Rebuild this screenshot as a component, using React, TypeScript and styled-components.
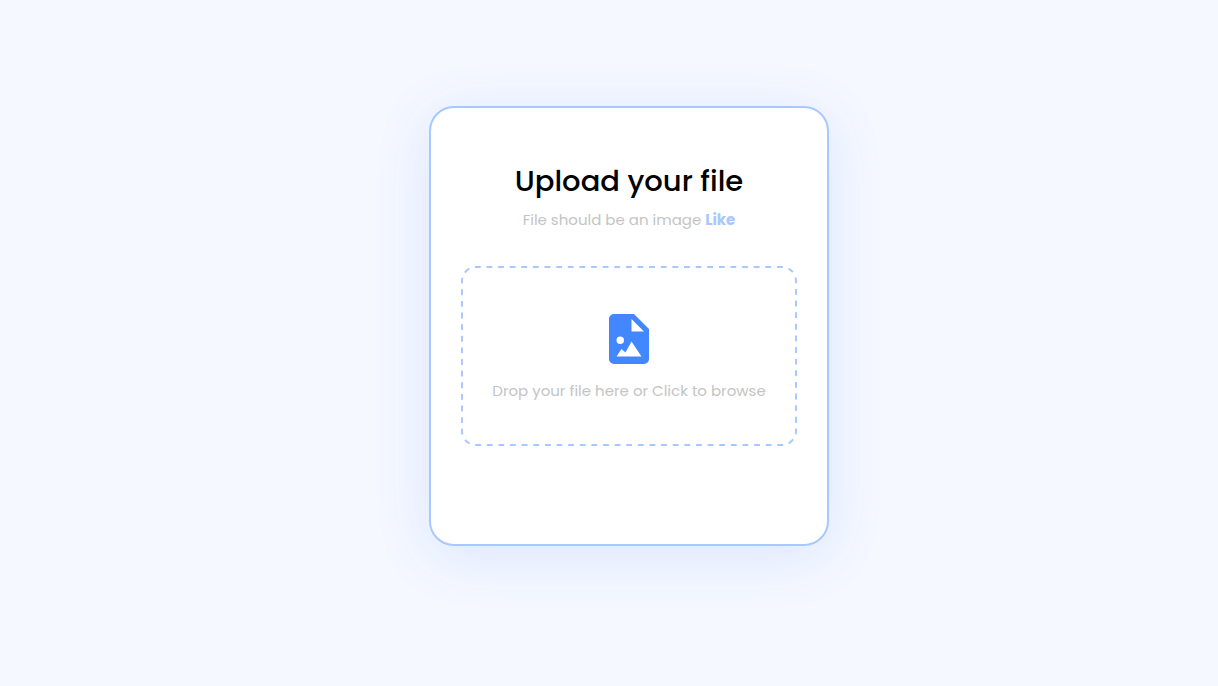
import React from "react";
import styled, { createGlobalStyle } from "styled-components";
import { BiSolidFileImage } from "react-icons/bi";

const GlobalStyle = createGlobalStyle`
  * {
    box-sizing: border-box;
    margin: 0;
    padding: 0;
  }

  body {
    background: #f5f8ff;
    font-family: Poppins, Inter, sans-serif;
    -webkit-font-smoothing: antialiased;
  }
`;

const Page = styled.main`
  display: flex;
  align-items: center;
  justify-content: center;
  min-height: 100vh;
  padding: 0 0 34px 40px;
`;

const Card = styled.section`
  width: 100%;
  max-width: 400px;
  min-height: 440px;
  padding: 50px 30px;
  background: #fff;
  border: 2px solid #a9c8ff;
  border-radius: 25px;
  box-shadow: 0 10px 60px rgb(218, 229, 255);
  text-align: center;
`;

const Title = styled.h1`
  font-size: 29px;
  font-weight: 500;
  line-height: 46px;
  color: #000;
`;

const Hint = styled.p`
  margin-bottom: 34px;
  padding-top: 4px;
  font-size: 15px;
  line-height: 24px;
  color: #c4c4c4;
`;

const Highlight = styled.strong`
  font-weight: 700;
  color: #a9c8ff;
`;

const DropZone = styled.label`
  position: relative;
  display: flex;
  flex-direction: column;
  align-items: center;
  justify-content: center;
  min-height: 180px;
  padding: 2px;
  font-size: 15px;
  line-height: 24px;
  color: #c4c4c4;
  cursor: pointer;
`;

const DashedOutline = styled.svg`
  position: absolute;
  inset: 1px;
  width: calc(100% - 2px);
  height: calc(100% - 2px);
  overflow: visible;
  fill: none;
  stroke: #a9c8ff;
  stroke-width: 2px;
`;

const FileInput = styled.input`
  position: absolute;
  inset: 0;
  width: 100%;
  height: 100%;
  opacity: 0;
  cursor: pointer;
`;

const FileIcon = styled(BiSolidFileImage)`
  margin-bottom: 10px;
  font-size: 60px;
  color: #4287ff;
`;

export default function App() {
  return (
    <>
      <GlobalStyle />
      <Page>
        <Card>
          <Title>Upload your file</Title>
          <Hint>
            File should be an image <Highlight>Like</Highlight>
          </Hint>
          <DropZone>
            <DashedOutline aria-hidden="true">
              <rect
                width="100%"
                height="100%"
                rx="14"
                pathLength="172"
                strokeDasharray="1 1"
                strokeDashoffset="0.2"
              />
            </DashedOutline>
            <FileIcon aria-hidden="true" />
            <span>Drop your file here or Click to browse</span>
            <FileInput type="file" accept="image/*" />
          </DropZone>
        </Card>
      </Page>
    </>
  );
}
